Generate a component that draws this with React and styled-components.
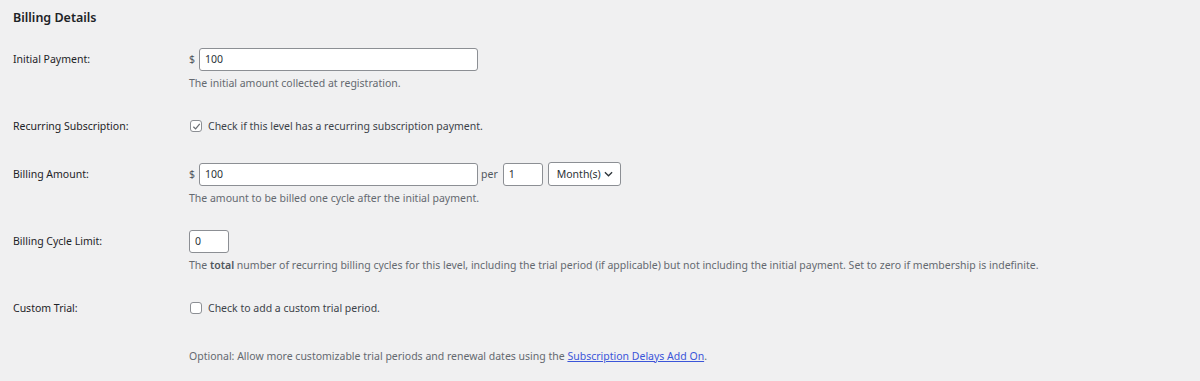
import styled, { createGlobalStyle } from 'styled-components';

const GlobalStyle = createGlobalStyle`
  body {
    margin: 0;
    background: #f0f0f1;
    color: #1d2327;
    font-family: "Noto Sans", "Open Sans", sans-serif;
  }
`;

const Wrap = styled.div`
  padding: 0 13px;
  height: 381px;
  box-sizing: border-box;
`;

const Heading = styled.h2`
  margin: 0;
  height: 35px;
  display: flex;
  align-items: center;
  font-size: 12.5px;
  font-weight: 600;
  color: #1d2327;
`;

const Row = styled.div`
  display: grid;
  grid-template-columns: 176px 1fr;
  padding: 12.5px 0;
`;

const Label = styled.div`
  font-size: 10.5px;
  font-weight: 400;
  line-height: 23px;
  color: #1d2327;
`;

const Field = styled.div`
  display: flex;
  align-items: center;
  height: 23px;
  font-size: 10.5px;
  color: #2c3338;
`;

const Unit = styled.span`
  margin: 0 ${p => p.$right || 4}px 0 ${p => p.$left || 0}px;
  color: #50575e;
`;

const TextInput = styled.input`
  box-sizing: border-box;
  width: ${p => p.$w}px;
  height: 23px;
  padding: 0 5px;
  border: 1px solid #8c8f94;
  border-radius: 3px;
  background: #fff;
  font: inherit;
  font-size: 10.5px;
  color: #2c3338;
  outline: none;
`;

const Select = styled.div`
  box-sizing: border-box;
  display: flex;
  align-items: center;
  justify-content: space-between;
  width: 73px;
  height: 24px;
  margin-left: 5px;
  padding: 0 7px 0 8px;
  border: 1px solid #8c8f94;
  border-radius: 3px;
  background: #fff;
  color: #2c3338;
`;

const Box = styled.span`
  box-sizing: border-box;
  display: inline-flex;
  align-items: center;
  justify-content: center;
  width: 12px;
  height: 12px;
  margin: 0 6px 0 1px;
  border: 1px solid #8c8f94;
  border-radius: 3px;
  background: #fff;
`;

const CheckText = styled.span`
  color: #3c434a;
`;

const Desc = styled.p`
  margin: 5px 0 0;
  font-size: 10.5px;
  line-height: 14px;
  color: #646970;

  b {
    font-weight: 600;
    color: #50575e;
  }
`;

const Note = styled.p`
  margin: 0;
  font-size: 10.5px;
  line-height: 23px;
  color: #646970;

  a {
    color: #3b55d9;
    text-decoration: underline;
  }
`;

const Checkbox = ({ checked }) => (
  <Box>
    {checked && (
      <svg width="9" height="9" viewBox="0 0 10 10">
        <path d="M1.5 5.2 L4 7.6 L8.6 2" fill="none" stroke="#6b6f74" strokeWidth="1.4" />
      </svg>
    )}
  </Box>
);

const Chevron = () => (
  <svg width="9" height="6" viewBox="0 0 10 6">
    <path d="M1 1 L5 5 L9 1" fill="none" stroke="#2c3338" strokeWidth="1.4" />
  </svg>
);

const App = () => (
  <Wrap>
    <GlobalStyle />
    <Heading>Billing Details</Heading>

    <Row>
      <Label>Initial Payment:</Label>
      <div>
        <Field>
          <Unit>$</Unit>
          <TextInput $w={279} defaultValue="100" />
        </Field>
        <Desc>The initial amount collected at registration.</Desc>
      </div>
    </Row>

    <Row>
      <Label>Recurring Subscription:</Label>
      <Field>
        <Checkbox checked />
        <CheckText>Check if this level has a recurring subscription payment.</CheckText>
      </Field>
    </Row>

    <Row>
      <Label>Billing Amount:</Label>
      <div>
        <Field>
          <Unit>$</Unit>
          <TextInput $w={279} defaultValue="100" />
          <Unit $left={3} $right={5}>per</Unit>
          <TextInput $w={40} defaultValue="1" />
          <Select>
            Month(s)
            <Chevron />
          </Select>
        </Field>
        <Desc>The amount to be billed one cycle after the initial payment.</Desc>
      </div>
    </Row>

    <Row>
      <Label>Billing Cycle Limit:</Label>
      <div>
        <Field>
          <TextInput $w={40} defaultValue="0" />
        </Field>
        <Desc>
          The <b>total</b> number of recurring billing cycles for this level, including the trial period (if applicable) but not including the initial payment. Set to zero if membership is indefinite.
        </Desc>
      </div>
    </Row>

    <Row>
      <Label>Custom Trial:</Label>
      <Field>
        <Checkbox />
        <CheckText>Check to add a custom trial period.</CheckText>
      </Field>
    </Row>

    <Row>
      <Label />
      <Note>
        Optional: Allow more customizable trial periods and renewal dates using the <a href="#">Subscription Delays Add On</a>.
      </Note>
    </Row>
  </Wrap>
);

export default App;
